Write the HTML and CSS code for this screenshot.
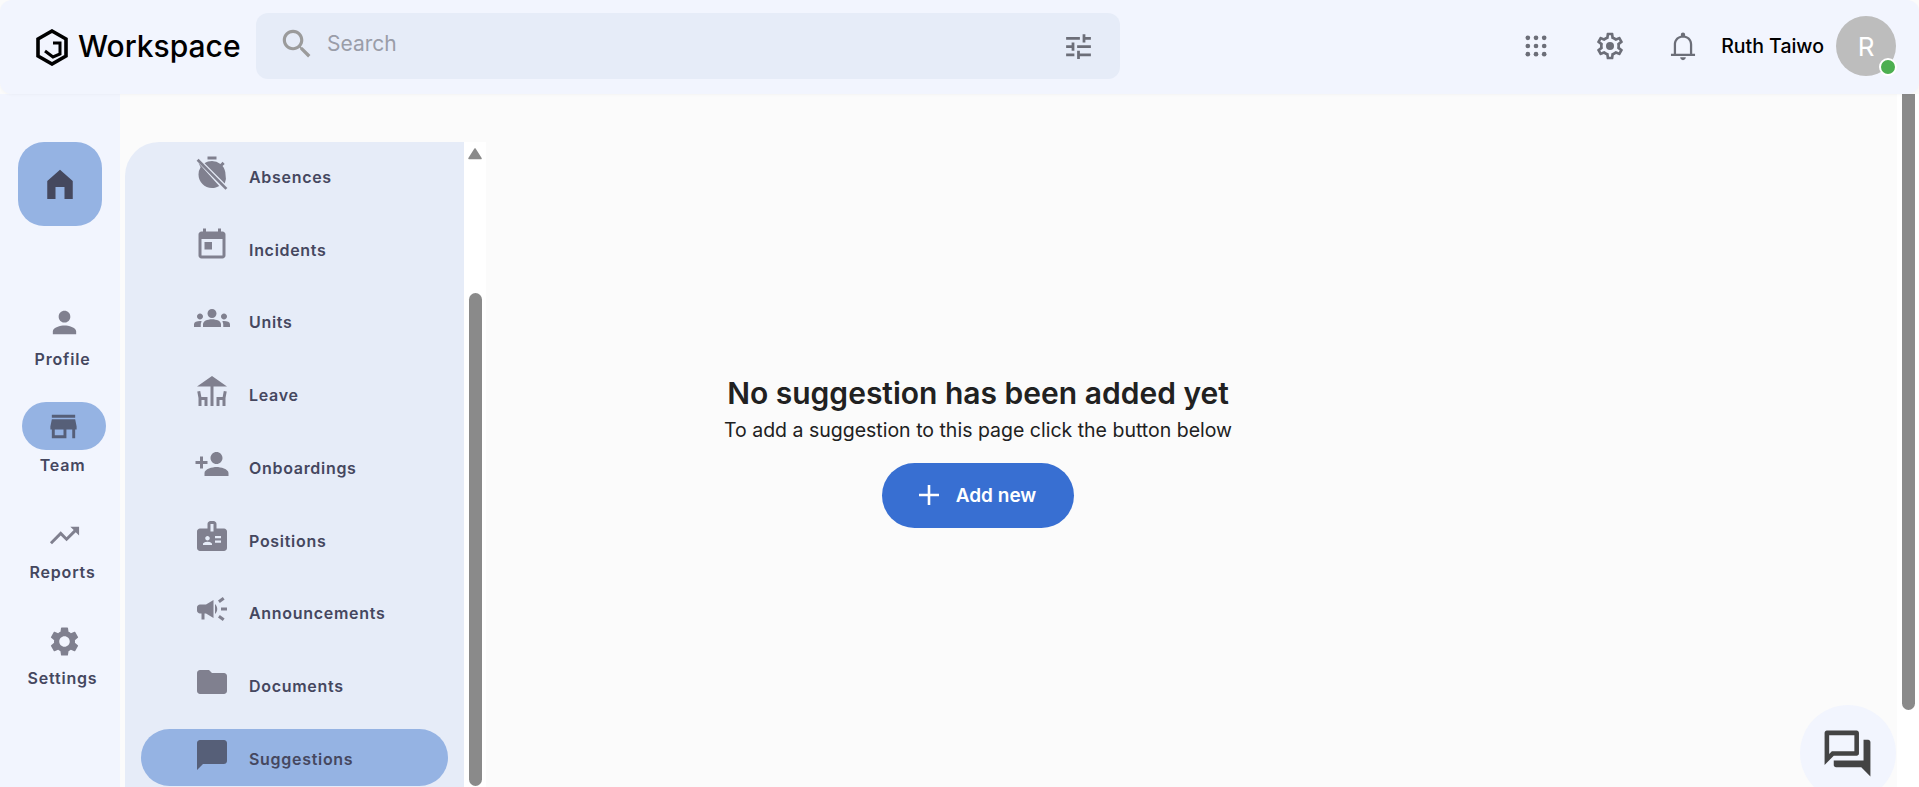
FILE: index.html
```html
<!DOCTYPE html>
<html lang="en">
<head>
    <meta charset="UTF-8">
    <meta name="viewport" content="width=device-width, initial-scale=1.0">
    <title>Workspace</title>
    <link rel="stylesheet" href="styles.css">
</head>
<body>
    <header class="topbar">
        <div class="brand">
            <svg class="brand-logo" viewBox="0 0 32 37"><path d="M16 2 30 10v17L16 35 2 27V10z" fill="none" stroke="#000" stroke-width="3.6"/><path d="M17 14h7v11l-7 3-8-6" fill="none" stroke="#000" stroke-width="3"/></svg>
            <span class="brand-name">Workspace</span>
        </div>
        <div class="search">
            <svg class="search-icon" viewBox="0 0 24 24"><path d="M15.5 14h-.79l-.28-.27C15.41 12.59 16 11.11 16 9.5 16 5.91 13.09 3 9.5 3S3 5.91 3 9.5 5.91 16 9.5 16c1.61 0 3.09-.59 4.23-1.57l.27.28v.79l5 4.99L20.49 19l-4.99-5zm-6 0C7.01 14 5 11.99 5 9.5S7.01 5 9.5 5 14 7.01 14 9.5 11.99 14 9.5 14z"/></svg>
            <span class="search-text">Search</span>
            <svg class="search-filter" viewBox="0 0 24 24"><path d="M3 17v2h6v-2H3zM3 5v2h10V5H3zm10 16v-2h8v-2h-8v-2h-2v6h2zM7 9v2H3v2h4v2h2V9H7zm14 4v-2H11v2h10zm-6-4h2V7h4V5h-4V3h-2v6z"/></svg>
        </div>
        <div class="top-actions">
            <svg class="top-icon dots" viewBox="0 0 24 24"><circle cx="5" cy="5" r="2"/><circle cx="12" cy="5" r="2"/><circle cx="19" cy="5" r="2"/><circle cx="5" cy="12" r="2"/><circle cx="12" cy="12" r="2"/><circle cx="19" cy="12" r="2"/><circle cx="5" cy="19" r="2"/><circle cx="12" cy="19" r="2"/><circle cx="19" cy="19" r="2"/></svg>
            <svg class="top-icon gear" viewBox="0 0 24 24"><path d="M19.43 12.98c.04-.32.07-.64.07-.98 0-.34-.03-.66-.07-.98l2.11-1.65c.19-.15.24-.42.12-.64l-2-3.46c-.09-.16-.26-.25-.44-.25-.06 0-.12.01-.17.03l-2.49 1c-.52-.4-1.08-.73-1.69-.98l-.38-2.65C14.46 2.18 14.25 2 14 2h-4c-.25 0-.46.18-.49.42l-.38 2.65c-.61.25-1.17.59-1.69.98l-2.49-1c-.06-.02-.12-.03-.18-.03-.17 0-.34.09-.43.25l-2 3.46c-.13.22-.07.49.12.64l2.11 1.65c-.04.32-.07.65-.07.98 0 .33.03.66.07.98l-2.11 1.65c-.19.15-.24.42-.12.64l2 3.46c.09.16.26.25.44.25.06 0 .12-.01.17-.03l2.49-1c.52.4 1.08.73 1.69.98l.38 2.65c.03.24.24.42.49.42h4c.25 0 .46-.18.49-.42l.38-2.65c.61-.25 1.17-.59 1.69-.98l2.49 1c.06.02.12.03.18.03.17 0 .34-.09.43-.25l2-3.46c.12-.22.07-.49-.12-.64l-2.11-1.65zm-1.98-1.71c.04.31.05.52.05.73 0 .21-.02.43-.05.73l-.14 1.13.89.7 1.08.84-.7 1.21-1.27-.51-1.04-.42-.9.68c-.43.32-.84.56-1.25.73l-1.06.43-.16 1.13-.2 1.35h-1.4l-.19-1.35-.16-1.13-1.06-.43c-.43-.18-.83-.41-1.23-.71l-.91-.7-1.06.43-1.27.51-.7-1.21 1.08-.84.89-.7-.14-1.13c-.03-.31-.05-.54-.05-.74s.02-.43.05-.73l.14-1.13-.89-.7-1.08-.84.7-1.21 1.27.51 1.04.42.9-.68c.43-.32.84-.56 1.25-.73l1.06-.43.16-1.13.2-1.35h1.39l.19 1.35.16 1.13 1.06.43c.43.18.83.41 1.23.71l.91.7 1.06-.43 1.27-.51.7 1.21-1.07.85-.89.7.14 1.13z"/><circle cx="12" cy="12" r="3"/></svg>
            <svg class="top-icon bell" viewBox="0 0 24 24"><path d="M12 22c1.1 0 2-.9 2-2h-4c0 1.1.9 2 2 2zm6.5-4.6V11c0-3.07-1.63-5.64-5-6.32V4c0-.83-.67-1.5-1.5-1.5s-1.5.67-1.5 1.5v.68C7.14 5.36 5.5 7.92 5.5 11v6.4h-2V19h17v-1.6zM16.9 17.4H7.1V11c0-3 1.8-4.9 4.9-4.9s4.9 1.9 4.9 4.9z"/></svg>
            <span class="user-name">Ruth Taiwo</span>
            <div class="avatar">R<span class="avatar-status"></span></div>
        </div>
    </header>

    <div class="layout">
        <nav class="rail">
            <a class="rail-home">
                <svg viewBox="0 0 24 24"><path d="M12 2.5 20.5 10v12h-5.5v-8H9v8H3.5V10z"/></svg>
            </a>
            <a class="rail-item">
                <span class="rail-icon"><svg viewBox="0 0 24 24"><path d="M12 12c2.21 0 4-1.79 4-4s-1.79-4-4-4-4 1.79-4 4 1.79 4 4 4zm0 2c-2.67 0-8 1.34-8 4v2h16v-2c0-2.66-5.33-4-8-4z"/></svg></span>
                <span class="rail-label">Profile</span>
            </a>
            <a class="rail-item active">
                <span class="rail-icon"><svg viewBox="0 0 24 24"><path d="M20 4H4v2h16V4zm1 10v-2l-1-5H4l-1 5v2h1v6h10v-6h4v6h2v-6h1zm-9 4H6v-4h6v4z"/></svg></span>
                <span class="rail-label">Team</span>
            </a>
            <a class="rail-item">
                <span class="rail-icon"><svg viewBox="0 0 24 24"><path d="M16 6l2.29 2.29-4.88 4.88-4-4L2 16.59 3.41 18l6-6 4 4 6.3-6.29L22 12V6z"/></svg></span>
                <span class="rail-label">Reports</span>
            </a>
            <a class="rail-item">
                <span class="rail-icon"><svg viewBox="0 0 24 24"><path d="M19.14 12.94c.04-.3.06-.61.06-.94 0-.32-.02-.64-.07-.94l2.03-1.58c.18-.14.23-.41.12-.61l-1.92-3.32c-.12-.22-.37-.29-.59-.22l-2.39.96c-.5-.38-1.03-.7-1.62-.94l-.36-2.54c-.04-.24-.24-.41-.48-.41h-3.84c-.24 0-.43.17-.47.41l-.36 2.54c-.59.24-1.13.57-1.62.94l-2.39-.96c-.22-.08-.47 0-.59.22L2.74 8.87c-.12.21-.08.47.12.61l2.03 1.58c-.05.3-.09.63-.09.94s.02.64.07.94l-2.03 1.58c-.18.14-.23.41-.12.61l1.92 3.32c.12.22.37.29.59.22l2.39-.96c.5.38 1.03.7 1.62.94l.36 2.54c.05.24.24.41.48.41h3.84c.24 0 .44-.17.47-.41l.36-2.54c.59-.24 1.13-.56 1.62-.94l2.39.96c.22.08.47 0 .59-.22l1.92-3.32c.12-.22.07-.47-.12-.61l-2.01-1.58zM12 15.6c-1.98 0-3.6-1.62-3.6-3.6s1.62-3.6 3.6-3.6 3.6 1.62 3.6 3.6-1.62 3.6-3.6 3.6z"/></svg></span>
                <span class="rail-label">Settings</span>
            </a>
        </nav>

        <main class="content">
            <div class="panel">
                <ul class="menu">
                    <li class="menu-item">
                        <svg viewBox="0 0 24 24"><path d="M9 1h6v2H9zM19.03 7.39l1.42-1.42-1.41-1.41-1.42 1.42A8.96 8.96 0 0 0 12 4c-1.83 0-3.53.55-4.95 1.48L20.52 18.95A8.96 8.96 0 0 0 21 13c0-2.12-.74-4.07-1.97-5.61zM3 5.4 4.4 8.2A8.96 8.96 0 0 0 3 13c0 4.97 4.03 9 9 9 1.78 0 3.43-.5 4.84-1.36z"/><path d="M2.4 3.2 21.6 22.6" stroke="#80808f" stroke-width="1.8"/></svg>
                        <span>Absences</span>
                    </li>
                    <li class="menu-item">
                        <svg viewBox="0 0 24 24"><path d="M19 3h-1V1h-2v2H8V1H6v2H5c-1.11 0-1.99.9-1.99 2L3 19c0 1.1.89 2 2 2h14c1.1 0 2-.9 2-2V5c0-1.1-.9-2-2-2zm0 16H5V8h14v11zM7 10h5v5H7z"/></svg>
                        <span>Incidents</span>
                    </li>
                    <li class="menu-item">
                        <svg viewBox="0 0 24 24"><path d="M12 12.75c1.63 0 3.07.39 4.24.9 1.08.48 1.76 1.56 1.76 2.73V18H6v-1.61c0-1.18.68-2.26 1.76-2.73 1.17-.52 2.61-.91 4.24-.91zM4 13c1.1 0 2-.9 2-2s-.9-2-2-2-2 .9-2 2 .9 2 2 2zm1.13 1.1c-.37-.06-.74-.1-1.13-.1-.99 0-1.93.21-2.78.58C.48 14.9 0 15.62 0 16.43V18h4.5v-1.61c0-.83.23-1.61.63-2.29zM20 13c1.1 0 2-.9 2-2s-.9-2-2-2-2 .9-2 2 .9 2 2 2zm4 3.43c0-.81-.48-1.53-1.22-1.85-.85-.37-1.79-.58-2.78-.58-.39 0-.76.04-1.13.1.4.68.63 1.46.63 2.29V18H24v-1.57zM12 6c1.66 0 3 1.34 3 3s-1.34 3-3 3-3-1.34-3-3 1.34-3 3-3z"/></svg>
                        <span>Units</span>
                    </li>
                    <li class="menu-item">
                        <svg viewBox="0 0 24 24"><path d="M22 9 12 2 2 9h9v13h2V9zM4.14 12l-1.96.37.82 4.37V22h2l.02-4H7v4h2v-6H4.9zM19.1 16H15v6h2v-4h1.98l.02 4h2v-5.26l.82-4.37-1.96-.37z"/></svg>
                        <span>Leave</span>
                    </li>
                    <li class="menu-item">
                        <svg viewBox="0 0 24 24"><path d="M15 12c2.21 0 4-1.79 4-4s-1.79-4-4-4-4 1.79-4 4 1.79 4 4 4zm-9-2V7H4v3H1v2h3v3h2v-3h3v-2H6zm9 4c-2.67 0-8 1.34-8 4v2h16v-2c0-2.66-5.33-4-8-4z"/></svg>
                        <span>Onboardings</span>
                    </li>
                    <li class="menu-item">
                        <svg viewBox="0 0 24 24"><path d="M20 7h-5V4c0-1.1-.9-2-2-2h-2c-1.1 0-2 .9-2 2v3H4c-1.1 0-2 .9-2 2v11c0 1.1.9 2 2 2h16c1.1 0 2-.9 2-2V9c0-1.1-.9-2-2-2zM9 12c.83 0 1.5.67 1.5 1.5S9.83 15 9 15s-1.5-.67-1.5-1.5S8.17 12 9 12zm3 6H6v-.75c0-1 2-1.5 3-1.5s3 .5 3 1.5V18zm1-9h-2V4h2v5zm5 7.5h-4V15h4v1.5zm0-3h-4V12h4v1.5z"/></svg>
                        <span>Positions</span>
                    </li>
                    <li class="menu-item">
                        <svg viewBox="0 0 24 24"><path d="M18 11v2h4v-2h-4zm-2 6.61c.96.71 2.21 1.65 3.2 2.39.4-.53.8-1.07 1.2-1.6-.99-.74-2.24-1.68-3.2-2.4-.4.54-.8 1.08-1.2 1.61zM20.4 5.6c-.4-.53-.8-1.07-1.2-1.6-.99.74-2.24 1.68-3.2 2.4.4.53.8 1.07 1.2 1.6.96-.72 2.21-1.65 3.2-2.4zM4 9c-1.1 0-2 .9-2 2v2c0 1.1.9 2 2 2h1v4h2v-4h1l5 3V6L8 9H4zm11.5 3c0-1.33-.58-2.53-1.5-3.35v6.69c.92-.81 1.5-2.01 1.5-3.34z"/></svg>
                        <span>Announcements</span>
                    </li>
                    <li class="menu-item">
                        <svg viewBox="0 0 24 24"><path d="M10 4H4c-1.1 0-1.99.9-1.99 2L2 18c0 1.1.9 2 2 2h16c1.1 0 2-.9 2-2V8c0-1.1-.9-2-2-2h-8l-2-2z"/></svg>
                        <span>Documents</span>
                    </li>
                    <li class="menu-item active">
                        <svg viewBox="0 0 24 24"><path d="M20 2H4c-1.1 0-2 .9-2 2v18l4-4h14c1.1 0 2-.9 2-2V4c0-1.1-.9-2-2-2z"/></svg>
                        <span>Suggestions</span>
                    </li>
                </ul>
                <div class="panel-scroll">
                    <svg class="scroll-arrow" viewBox="0 0 14 12"><path d="M7 1 13 10.5H1z" fill="#8a8a8a" stroke="#8a8a8a" stroke-width="1.5" stroke-linejoin="round"/></svg>
                    <div class="panel-thumb"></div>
                </div>
            </div>

            <section class="empty">
                <h2>No suggestion has been added yet</h2>
                <p>To add a suggestion to this page click the button below</p>
                <button class="add-btn">
                    <svg viewBox="0 0 24 24"><path d="M12 2v20M2 12h20" stroke="#fff" stroke-width="2.6" fill="none"/></svg>
                    Add new
                </button>
            </section>

            <div class="chat-fab">
                <svg viewBox="0 0 24 24"><path d="M15 4v7H5.17L4 12.17V4h11m1-2H3c-.55 0-1 .45-1 1v14l4-4h10c.55 0 1-.45 1-1V3c0-.55-.45-1-1-1zm5 4h-2v9H6v2c0 .55.45 1 1 1h11l4 4V7c0-.55-.45-1-1-1z"/></svg>
            </div>
        </main>

        <div class="page-scroll">
            <div class="page-thumb"></div>
        </div>
    </div>
</body>
</html>
```

FILE: styles.css
```css
* {
    box-sizing: border-box;
}

html, body {
    height: 100%;
}

body {
    margin: 0;
    overflow: hidden;
    background: #fbfbfb;
    font-family: Inter, "Liberation Sans", sans-serif;
}

/* top bar */
.topbar {
    position: relative;
    z-index: 2;
    display: flex;
    align-items: center;
    height: 94px;
    padding: 0 23px 0 36px;
    background: #f2f5fe;
    border-radius: 12px;
    box-shadow: 0 1px 3px rgba(0, 0, 0, .03);
}

.brand {
    display: flex;
    align-items: center;
    width: 220px;
}

.brand-logo {
    width: 32px;
    height: 37px;
    margin-right: 10px;
}

.brand-name {
    margin-top: -2px;
    font-size: 30px;
    font-weight: 500;
    color: #000;
}

.search {
    display: flex;
    align-items: center;
    width: 864px;
    height: 66px;
    margin-top: -2px;
    padding: 0 25px 0 22px;
    background: #e6ecf8;
    border-radius: 12px;
}

.search-icon {
    width: 38px;
    height: 38px;
    margin-top: -4px;
    fill: #9b9b9b;
}

.search-text {
    flex: 1;
    margin-left: 11px;
    margin-top: -5px;
    font-size: 21px;
    color: #9a9da8;
}

.search-filter {
    width: 33px;
    height: 33px;
    fill: #6c6e78;
}

.top-actions {
    display: flex;
    align-items: center;
    margin-top: -2px;
    margin-left: auto;
}

.top-icon {
    fill: #6c6e78;
}

.top-icon.dots {
    width: 28px;
    height: 28px;
    margin-right: 44px;
}

.top-icon.gear {
    width: 32px;
    height: 32px;
    margin-right: 39.5px;
}

.top-icon.bell {
    width: 34px;
    height: 34px;
    margin-right: 21.5px;
}

.user-name {
    font-size: 19.5px;
    font-weight: 500;
    color: #000;
    margin-right: 12px;
}

.avatar {
    position: relative;
    display: flex;
    align-items: center;
    justify-content: center;
    width: 60px;
    height: 60px;
    border-radius: 50%;
    background: #bdbdbd;
    font-size: 26px;
    color: #fff;
}

.avatar-status {
    position: absolute;
    right: -1px;
    bottom: 0;
    width: 18px;
    height: 18px;
    border-radius: 50%;
    border: 2px solid #fff;
    background: #4caf50;
}

/* page body */
.layout {
    display: flex;
    height: 693px;
}

.rail {
    display: flex;
    flex-direction: column;
    width: 120px;
    flex: none;
    padding: 48px 10px 0 18px;
    background: #f2f5fe;
}

.rail-home {
    display: flex;
    align-items: center;
    justify-content: center;
    width: 84px;
    height: 84px;
    margin-bottom: 72px;
    border-radius: 26px;
    background: #95b3e3;
}

.rail-home svg {
    width: 36px;
    height: 36px;
    fill: #45485e;
}

.rail-item {
    display: flex;
    flex-direction: column;
    align-items: center;
    width: 92px;
    margin-bottom: 35px;
}

.rail-home + .rail-item {
    margin-bottom: 33px;
}

.rail-icon {
    display: flex;
    align-items: center;
    justify-content: center;
    width: 84px;
    height: 48px;
    border-radius: 24px;
}

.rail-icon svg {
    width: 35px;
    height: 35px;
    fill: #80808f;
}

.rail-label {
    margin-top: 3px;
    margin-left: -3px;
    font-size: 16px;
    line-height: 20px;
    font-weight: 600;
    letter-spacing: .8px;
    color: #45475f;
}

.rail-item.active {
    margin-bottom: 36px;
}

.rail-item.active .rail-icon {
    background: #95b3e3;
}

.rail-item.active .rail-icon svg {
    margin-left: -2px;
    fill: #565f78;
}

.rail-item.active .rail-label {
    margin-top: 5px;
}

/* content */
.content {
    position: relative;
    flex: 1;
    display: flex;
    padding: 48px 0 0 5px;
    overflow: hidden;
}

.panel {
    display: flex;
    flex: none;
    width: 361px;
    height: 645px;
}

.menu {
    width: 339px;
    margin: 0;
    padding: 0 16px;
    list-style: none;
    background: #e6ecf8;
    border-radius: 34px 0 0 0;
}

.menu-item {
    display: flex;
    align-items: center;
    height: 57px;
    margin-top: 15.75px;
    padding-left: 53px;
    border-radius: 29px;
    font-size: 16px;
    font-weight: 600;
    letter-spacing: .7px;
    color: #45475f;
}

.menu-item:first-child {
    margin-top: 5px;
}

.menu-item span {
    margin-top: 2.5px;
}

.menu-item svg {
    width: 36px;
    height: 36px;
    margin-top: -6px;
    margin-right: 19px;
    fill: #80808f;
}

.menu-item.active {
    background: #95b3e3;
}

.menu-item.active svg {
    fill: #565f78;
}

.panel-scroll {
    display: flex;
    flex-direction: column;
    align-items: center;
    width: 22px;
    padding-top: 6px;
    background: #fff;
}

.scroll-arrow {
    width: 16px;
    height: 12px;
    margin-bottom: 133px;
}

.panel-thumb {
    flex: 1;
    width: 13px;
    margin-bottom: 1px;
    border-radius: 7px;
    background: #8a8a8a;
}

.empty {
    display: flex;
    flex-direction: column;
    align-items: center;
    width: 984px;
    padding-top: 230.5px;
    color: #212121;
}

.empty h2 {
    margin: 0;
    font-size: 30px;
    line-height: 40px;
    font-weight: 600;
}

.empty p {
    margin: 2px 0 0;
    font-size: 19.5px;
    line-height: 31px;
}

.add-btn {
    display: flex;
    align-items: center;
    justify-content: center;
    width: 192px;
    height: 65px;
    margin-top: 17px;
    padding: 0 3px 0 0;
    border: 0;
    border-radius: 33px;
    background: #386fd2;
    font-family: inherit;
    font-size: 19px;
    font-weight: 600;
    color: #fff;
}

.add-btn svg {
    width: 24px;
    height: 24px;
    margin-right: 15px;
}

.chat-fab {
    position: absolute;
    left: 1680px;
    top: 611px;
    display: flex;
    align-items: center;
    justify-content: center;
    width: 96px;
    height: 96px;
    padding-right: 2px;
    border-radius: 50%;
    background: #f2f5fe;
}

.chat-fab svg {
    width: 55px;
    height: 55px;
    fill: #444;
}

.page-scroll {
    flex: none;
    width: 22px;
    padding-left: 5px;
    background: #fff;
}

.page-thumb {
    width: 13px;
    height: 616px;
    border-radius: 0 0 7px 7px;
    background: #8a8a8a;
}
```
